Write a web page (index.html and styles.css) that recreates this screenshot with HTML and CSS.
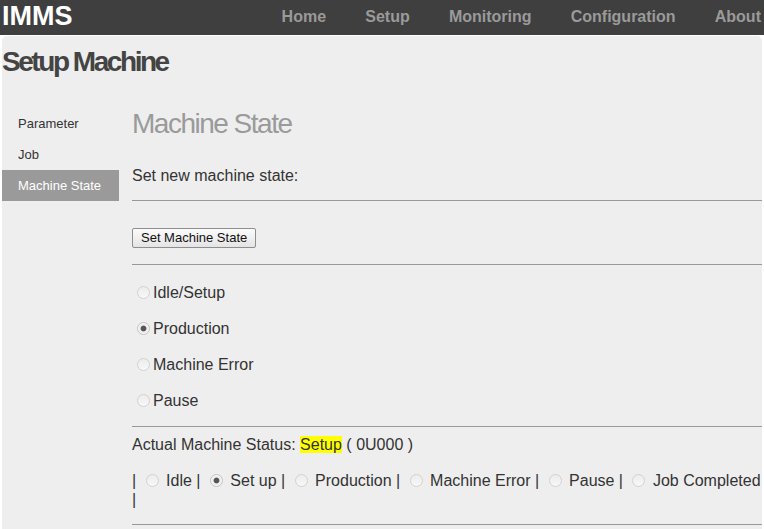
FILE: index.html
```html
<!DOCTYPE html>
<html lang="en">
<head>
<meta charset="utf-8">
<title>IMMS - Setup Machine</title>
<link rel="stylesheet" href="styles.css">
</head>
<body>
<header class="topbar">
  <div class="brand">IMMS</div>
  <nav class="nav">
    <a class="nav-link" href="#">Home</a>
    <a class="nav-link" href="#">Setup</a>
    <a class="nav-link" href="#">Monitoring</a>
    <a class="nav-link" href="#">Configuration</a>
    <a class="nav-link" href="#">About</a>
  </nav>
</header>
<div class="panel">
  <h1 class="page-title">Setup Machine</h1>
  <div class="layout">
    <ul class="side">
      <li class="side-item">Parameter</li>
      <li class="side-item">Job</li>
      <li class="side-item active">Machine State</li>
    </ul>
    <main class="main">
      <h2 class="section-title">Machine State</h2>
      <p class="prompt">Set new machine state:</p>
      <hr class="rule rule-a">
      <button class="btn" type="button">Set Machine State</button>
      <hr class="rule rule-b">
      <div class="choices">
        <div class="choice"><input class="radio" type="radio" name="ns" disabled><label>Idle/Setup</label></div>
        <div class="choice"><input class="radio" type="radio" name="ns" checked disabled><label>Production</label></div>
        <div class="choice"><input class="radio" type="radio" name="ns" disabled><label>Machine Error</label></div>
        <div class="choice"><input class="radio" type="radio" name="ns" disabled><label>Pause</label></div>
      </div>
      <hr class="rule rule-c">
      <p class="status">Actual Machine Status: <mark class="hl">Setup</mark> ( 0U000 )</p>
      <p class="states">| <input class="radio" type="radio" name="as" disabled> Idle | <input class="radio" type="radio" name="as" checked disabled> Set up | <input class="radio" type="radio" name="as" disabled> Production | <input class="radio" type="radio" name="as" disabled> Machine Error | <input class="radio" type="radio" name="as" disabled> Pause | <input class="radio" type="radio" name="as" disabled> Job Completed |</p>
      <hr class="rule rule-d">
    </main>
  </div>
</div>
</body>
</html>
```
FILE: styles.css
```css
html, body {
  margin: 0;
  padding: 0;
  background: #ffffff;
  font-family: "Liberation Sans", Arial, sans-serif;
  color: #333333;
  overflow: hidden;
}

.topbar {
  display: flex;
  align-items: flex-start;
  height: 35px;
  background: #3f3f3f;
  overflow: hidden;
  white-space: nowrap;
}

.brand {
  flex: 0 0 260px;
  padding-left: 2px;
  font-size: 27px;
  font-weight: bold;
  line-height: 32px;
  color: #ffffff;
}

.nav {
  display: flex;
  flex: 0 0 auto;
}

.nav-link {
  padding: 0 19.6px;
  font-size: 16px;
  font-weight: bold;
  line-height: 33px;
  color: #9a9a9a;
  text-decoration: none;
}

.panel {
  margin: 1px 2px 0;
  background: #eeeeee;
  border-radius: 5px 5px 0 0;
  min-height: 500px;
}

.page-title {
  margin: 0;
  padding-top: 11px;
  font-size: 28px;
  font-weight: bold;
  line-height: 30px;
  letter-spacing: -2.45px;
  color: #444444;
}

.layout {
  display: flex;
  align-items: flex-start;
  margin-top: 31px;
}

.side {
  flex: 0 0 117px;
  margin: 0 13px 0 0;
  padding: 0;
  list-style: none;
}

.side-item {
  padding: 0 16px;
  font-size: 13px;
  line-height: 31px;
  color: #333333;
}

.side-item.active {
  background: #9a9a9a;
  color: #ffffff;
}

.main {
  flex: 1 1 auto;
  min-width: 0;
}

.section-title {
  margin: 0;
  font-size: 28px;
  font-weight: normal;
  line-height: 32px;
  letter-spacing: -1.5px;
  color: #9a9a9a;
}

.prompt {
  margin: 27px 0 0;
  font-size: 16px;
  line-height: 18px;
}

.rule {
  height: 0;
  border: 0;
  border-top: 1px solid #999999;
  margin: 0;
}

.rule-a { margin-top: 15px; }
.rule-b { margin-top: 16px; }
.rule-c { margin-top: 7px; }
.rule-d { margin-top: 15px; }

.btn {
  display: block;
  margin-top: 27px;
  padding: 1px 8px;
  font-family: "Liberation Sans", Arial, sans-serif;
  font-size: 13px;
  line-height: 16px;
  color: #111111;
  background: linear-gradient(#fbfbfb, #e4e4e4);
  border: 1px solid #8e8e8e;
  border-radius: 2px;
}

.radio {
  -webkit-appearance: none;
  appearance: none;
  box-sizing: border-box;
  width: 13px;
  height: 13px;
  margin: 0 3px 0 5px;
  padding: 0;
  border: 1px solid #d2d2d2;
  border-radius: 50%;
  background: linear-gradient(#ececec, #f8f8f8);
  vertical-align: -1px;
}

.radio:checked {
  border-color: #c4c4c4;
  background: radial-gradient(circle, #555555 0, #555555 2.5px, #eeeeee 3.3px, #f6f6f6 6px);
}

.choices {
  margin-top: 10px;
}

.choice {
  height: 36px;
  font-size: 16px;
  line-height: 36px;
}

.status {
  margin: 9px 0 0;
  font-size: 16px;
  line-height: 18px;
}

.hl {
  background: #ffff00;
  color: inherit;
}

.states {
  margin: 17px 0 0;
  font-size: 16px;
  line-height: 19px;
}
```
